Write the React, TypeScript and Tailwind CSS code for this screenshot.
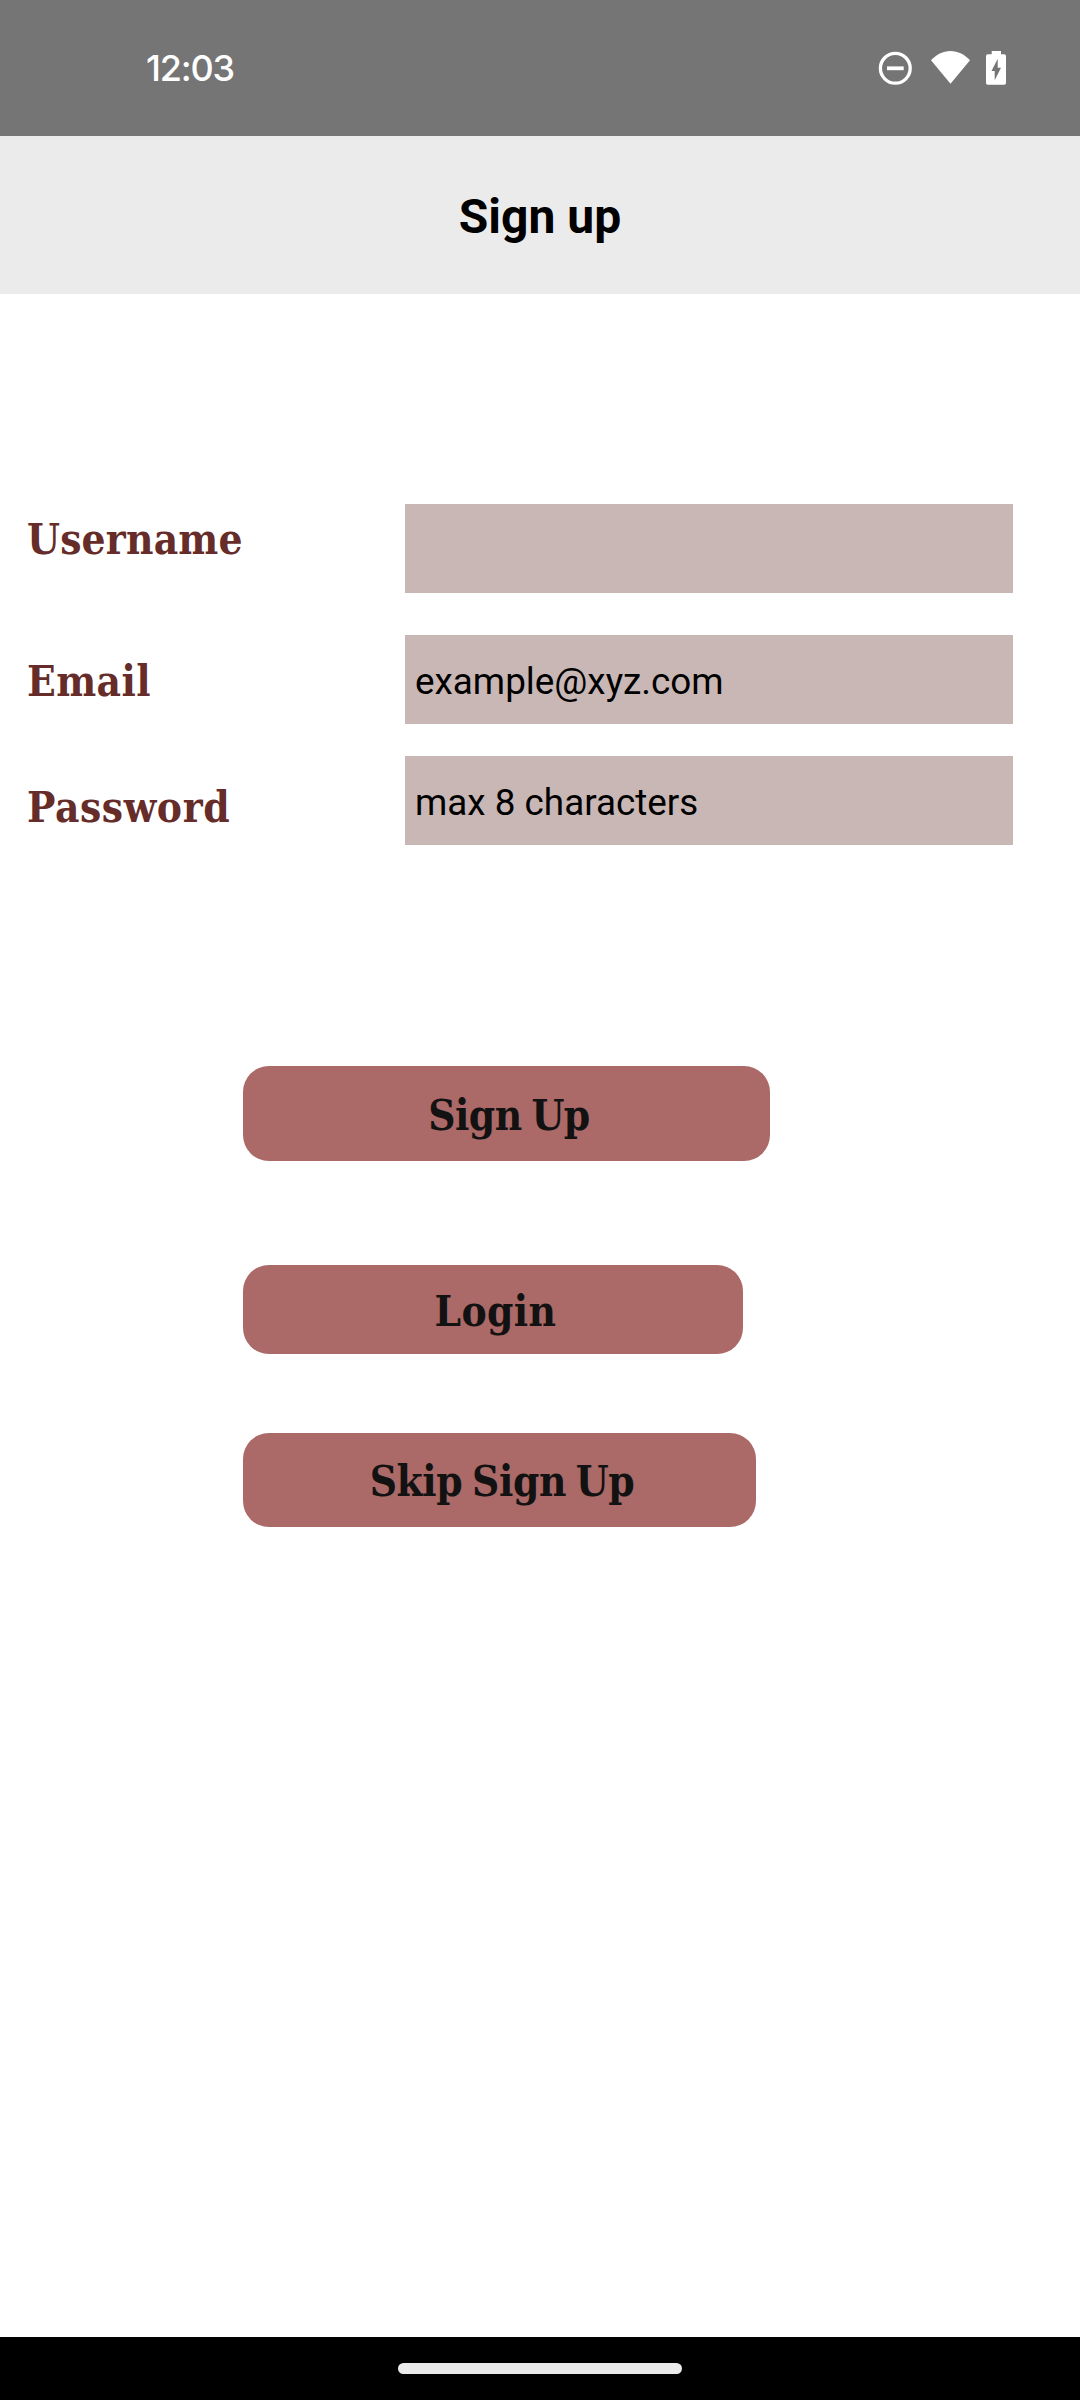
import React from 'react';

const fields = [
  { label: 'Username', value: '', row: 'mt-[210px]', labelPos: 'pt-[8px] tracking-[0.2px]' },
  { label: 'Email', value: 'example@xyz.com', row: 'mt-[42px]', labelPos: 'pt-[19px] tracking-[0.4px]' },
  { label: 'Password', value: 'max 8 characters', row: 'mt-[32px]', labelPos: 'pt-[24px] tracking-[0.6px]' },
];

const buttons = [
  { label: 'Sign Up', box: 'mt-[221px] h-[95px] w-[527px] pl-[5px] tracking-[-0.5px]' },
  { label: 'Login', box: 'mt-[104px] h-[89px] w-[500px] pl-[5px] tracking-[0.4px]' },
  { label: 'Skip Sign Up', box: 'mt-[79px] h-[94px] w-[513px] pl-[5px] tracking-[-0.4px]' },
];

function StatusIcons() {
  return (
    <svg className="h-[36px] w-[130px]" viewBox="878 50 130 36" fill="none">
      <circle cx="895.3" cy="68.3" r="14.9" stroke="#fff" strokeWidth="3.3" />
      <path d="M887 66.4h16.7v3.8H887z" fill="#fff" />
      <path d="M931 60.2C936.3 54.7 943 51 950.5 51C958 51 964.7 54.7 970 60.2L950.5 83.7Z" fill="#fff" />
      <path
        d="M991.7 51h9.3v3.2h3.2q1.8 0 1.8 1.8v27q0 1.7-1.8 1.7h-16.4q-1.8 0-1.8-1.7V56q0-1.8 1.8-1.8h3.9zM997.7 58.7L991.5 71.1h3.2v9.2L1001 67.7h-3.3z"
        fill="#fff"
        fillRule="evenodd"
      />
    </svg>
  );
}

export default function App() {
  return (
    <div className="flex h-[2400px] w-[1080px] flex-col bg-white font-['Roboto',sans-serif]">
      <div className="flex h-[136px] items-center justify-between bg-[#757575] pr-[72px] pl-[146px]">
        <span className="font-['Inter',sans-serif] text-[36px] leading-none font-medium tracking-[-1.2px] text-white">12:03</span>
        <StatusIcons />
      </div>
      <header className="flex h-[158px] items-center justify-center bg-[#ebebeb] pt-[4px] text-[48px] font-bold text-black">Sign up</header>
      {fields.map((f) => (
        <div key={f.label} className={`flex h-[89px] ${f.row}`}>
          <div className={`w-[405px] pl-[27px] font-['DejaVu_Serif_Condensed','DejaVu_Serif',serif] text-[42px] leading-[56px] font-bold whitespace-nowrap text-[#652c29] ${f.labelPos}`}>{f.label}</div>
          <div className="flex w-[608px] items-center bg-[#c9b7b5] pt-[4px] pl-[10px] text-[36.85px] text-black">{f.value}</div>
        </div>
      ))}
      {buttons.map((b) => (
        <button key={b.label} className={`ml-[243px] rounded-[26px] bg-[#ab6967] pt-[3px] font-['DejaVu_Serif_Condensed','DejaVu_Serif',serif] text-[42px] font-bold [word-spacing:-3px] text-[#121212] ${b.box}`}>{b.label}</button>
      ))}
      <div className="mt-auto flex h-[63px] items-center justify-center bg-black">
        <div className="h-[11px] w-[284px] rounded-full bg-[#ebebeb]" />
      </div>
    </div>
  );
}
